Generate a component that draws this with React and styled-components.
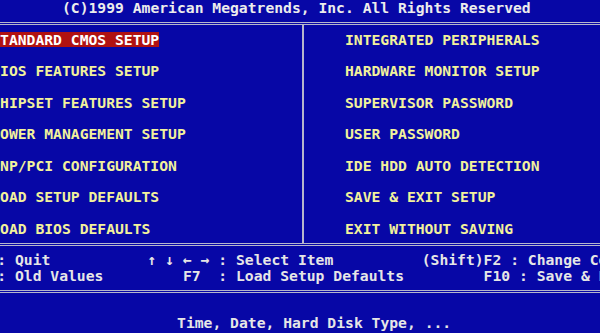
import React from 'react';
import styled, { createGlobalStyle } from 'styled-components';

// one text cell of the 80x25 BIOS screen
const CH = 8.85;
const ROW = 15.75;
const col = (n) => `${(n * CH).toFixed(2)}px`;

const GlobalStyle = createGlobalStyle`
  html, body {
    margin: 0;
    padding: 0;
    background: #0707a6;
    overflow: hidden;
  }
  #root {
    width: 600px;
    height: 333px;
    overflow: hidden;
  }
`;

const Screen = styled.div`
  width: 708px;
  margin-left: -35.35px;
  font-family: "DejaVu Sans Mono", "Liberation Mono", monospace;
  font-weight: bold;
  font-size: 14.7px;
  line-height: ${ROW}px;
  white-space: pre;
  color: #e4e4e4;
`;

const Title = styled.div`
  height: ${ROW}px;
  padding-left: ${col(11)};
  color: #ececec;
`;

const MenuFrame = styled.div`
  margin-top: 6.25px;
  display: grid;
  grid-template-columns: 339.35px 1fr;
  border-top: 3px double #b6b6cc;
  border-bottom: 3px double #b6b6cc;
`;

const MenuColumn = styled.div`
  display: flex;
  flex-direction: column;
  align-items: flex-start;
  gap: ${ROW}px;
  padding: 6.5px 0 6.75px ${(p) => p.$indent};
  border-right: ${(p) => (p.$divider ? '2px solid #b6b6cc' : 'none')};
`;

const MenuItem = styled.div`
  height: ${ROW}px;
  color: ${(p) => (p.$active ? '#ffffff' : '#f2f29c')};
  background: ${(p) => (p.$active ? '#b01212' : 'transparent')};
`;

const KeyBar = styled.div`
  margin-top: 6px;
  padding-bottom: 6.5px;
  border-bottom: 3px double #b6b6cc;
`;

const KeyRow = styled.div`
  height: ${ROW}px;
  margin-left: -2.75px;
  color: #e6e6e6;
`;

const Help = styled.div`
  margin-top: 22px;
  height: ${ROW}px;
  padding-left: ${col(24)};
  color: #e6e6e6;
`;

const leftItems = [
  'STANDARD CMOS SETUP',
  'BIOS FEATURES SETUP',
  'CHIPSET FEATURES SETUP',
  'POWER MANAGEMENT SETUP',
  'PNP/PCI CONFIGURATION',
  'LOAD SETUP DEFAULTS',
  'LOAD BIOS DEFAULTS',
];

const rightItems = [
  'INTEGRATED PERIPHERALS',
  'HARDWARE MONITOR SETUP',
  'SUPERVISOR PASSWORD',
  'USER PASSWORD',
  'IDE HDD AUTO DETECTION',
  'SAVE & EXIT SETUP',
  'EXIT WITHOUT SAVING',
];

const keyLines = [
  'Esc : Quit           \u2191 \u2193 \u2190 \u2192 : Select Item          (Shift)F2 : Change Color',
  ' F5 : Old Values         F7  : Load Setup Defaults         F10 : Save & Exit Setup',
];

const App = () => {
  return (
    <>
      <GlobalStyle />
      <Screen>
        <Title>(C)1999 American Megatrends, Inc. All Rights Reserved</Title>

        <MenuFrame>
          <MenuColumn $divider $indent={col(3)}>
            {leftItems.map((item, i) => (
              <MenuItem key={item} $active={i === 0}>{item}</MenuItem>
            ))}
          </MenuColumn>
          <MenuColumn $indent="41px">
            {rightItems.map((item) => (
              <MenuItem key={item}>{item}</MenuItem>
            ))}
          </MenuColumn>
        </MenuFrame>

        <KeyBar>
          {keyLines.map((line) => (
            <KeyRow key={line}>{line}</KeyRow>
          ))}
        </KeyBar>

        <Help>Time, Date, Hard Disk Type, ...</Help>
      </Screen>
    </>
  );
};

export default App;
